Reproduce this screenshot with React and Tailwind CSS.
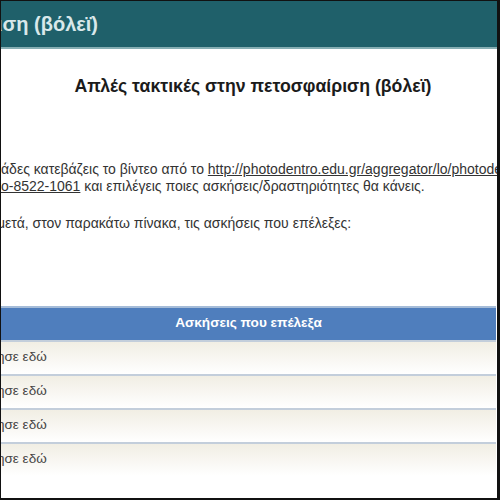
import React from 'react'

const rows = [1, 2, 3, 4]

function Clipped({ prefix, children, className = '' }) {
  // prefix overflows to the left and gets cut by the page edge
  return (
    <div className={`flex whitespace-nowrap ${className}`}>
      <div className="w-0 flex justify-end shrink-0">
        <span className="shrink-0">{prefix}</span>
      </div>
      <span className="shrink-0">{children}</span>
    </div>
  )
}

export default function App() {
  return (
    <div className="w-[500px] h-[500px] overflow-hidden bg-white border-t border-l border-r-[3px] border-b-2 border-[#111] font-['Liberation_Sans',Arial,sans-serif] flex flex-col">
      <header className="h-[48px] shrink-0 bg-[#1f606a] border-b-2 border-[#86aeb3] flex items-center">
        <div className="w-[97px] flex justify-end shrink-0 whitespace-nowrap">
          <span className="shrink-0 text-[20px] font-bold text-[#d9e8ea]">
            Απλές τακτικές στην πετοσφαίριση (βόλεϊ)
          </span>
        </div>
      </header>

      <h1 className="mt-[24px] text-center text-[17.7px] font-bold text-[#1b1b1b] pl-[8px]">
        Απλές τακτικές στην πετοσφαίριση (βόλεϊ)
      </h1>

      <div className="mt-[61px] text-[14px] leading-[17px] text-[#333]">
        <Clipped prefix="Οι ομ">
          άδες κατεβάζεις το βίντεο από το{' '}
          <span className="underline">http://photodentro.edu.gr/aggregator/lo/photodentro-lor-8521-</span>
        </Clipped>
        <Clipped prefix={<span className="underline">photodentr</span>}>
          <span className="underline">o-8522-1061</span> και επιλέγεις ποιες ασκήσεις/δραστηριότητες θα κάνεις.
        </Clipped>
        <Clipped prefix="Γράψε " className="mt-[20px] -ml-[4px]">
          μετά, στον παρακάτω πίνακα, τις ασκήσεις που επέλεξες:
        </Clipped>
      </div>

      <div className="mt-[74px] mr-[1px]">
        <div className="h-[34px] bg-[#4f7ebd] border-t-2 border-[#a5bcd8] flex items-center justify-center">
          <span className="text-[13.6px] font-bold text-white">Ασκήσεις που επέλεξα</span>
        </div>
        {rows.map((r) => (
          <div
            key={r}
            className="h-[34px] border-t-2 border-[#c3cedb] bg-gradient-to-b from-[#f1eee4] to-white flex items-center text-[13.5px] text-[#444]"
          >
            <Clipped prefix="Πληκτρολόγ" className="-ml-[4px]">ησε εδώ</Clipped>
          </div>
        ))}
      </div>
    </div>
  )
}
